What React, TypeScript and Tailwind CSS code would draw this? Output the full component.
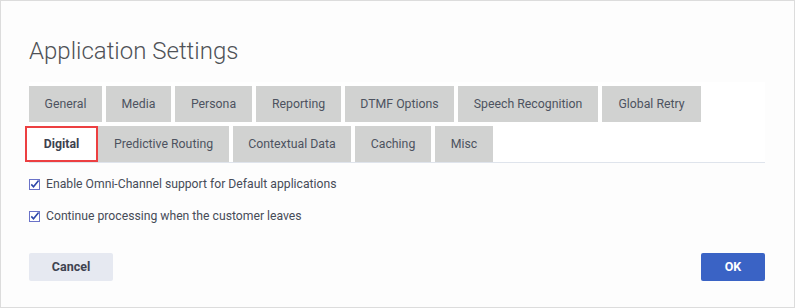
import React from 'react';

const rowOne = [
  { label: 'General', w: 'w-[73px]' },
  { label: 'Media', w: 'w-[65px]' },
  { label: 'Persona', w: 'w-[77px]' },
  { label: 'Reporting', w: 'w-[85px]' },
  { label: 'DTMF Options', w: 'w-[109px]' },
  { label: 'Speech Recognition', w: 'w-[140px]' },
  { label: 'Global Retry', w: 'w-[99px]' },
];

const rowTwo = [
  { label: 'Predictive Routing', w: 'w-[131px]' },
  { label: 'Contextual Data', w: 'w-[118px]' },
  { label: 'Caching', w: 'w-[76px]' },
  { label: 'Misc', w: 'w-[58px]' },
];

const CheckBox = () => (
  <svg width="11" height="11" viewBox="0 0 11 11" className="shrink-0">
    <rect x="0.5" y="0.5" width="10" height="10" fill="#fff" stroke="#6a72c8" strokeWidth="1" />
    <path d="M2.3 5.4 L4.5 7.8 L9.6 1.6" fill="none" stroke="#2d47a8" strokeWidth="1.6" />
  </svg>
);

const App: React.FC = () => {
  return (
    <div className="w-[795px] h-[308px] border border-[#dcdcdc] bg-[#fdfdfd] pl-[28px] pr-[29px] text-[#4b5060]" style={{ fontFamily: 'Roboto, "Liberation Sans", sans-serif' }}>
      <h1 className="mt-[36px] text-[24px] leading-[28px] font-light text-[#4f5257]">Application Settings</h1>

      <div className="mt-[17px] bg-white border-b border-[#dfe4ec] pt-[4px]">
        <div className="flex gap-[4px]">
          {rowOne.map(t => (
            <div key={t.label} className={`${t.w} h-[36px] pt-[1px] bg-[#d1d2d1] flex items-center justify-center text-[12.3px] text-[#4d5260]`}>
              {t.label}
            </div>
          ))}
        </div>
        <div className="flex mt-[4px]">
          <div className="-ml-[4px] w-[73px] h-[36px] border-2 border-[#ec3f41] bg-white flex items-center justify-center text-[12.3px] font-bold text-[#3d4250]">
            Digital
          </div>
          <div className="flex gap-[4px]">
            {rowTwo.map(t => (
              <div key={t.label} className={`${t.w} h-[36px] pt-[1px] bg-[#d1d2d1] flex items-center justify-center text-[12.3px] text-[#4d5260]`}>
                {t.label}
              </div>
            ))}
          </div>
        </div>
      </div>

      <div className="mt-[11px] flex flex-col gap-[12px] text-[12.2px] text-[#474c58]">
        <label className="flex items-center gap-[6px] h-[20px]">
          <CheckBox />
          <span>Enable Omni-Channel support for Default applications</span>
        </label>
        <label className="flex items-center gap-[6px] h-[20px]">
          <CheckBox />
          <span>Continue processing when the customer leaves</span>
        </label>
      </div>

      <div className="mt-[27px] flex justify-between">
        <button className="w-[84px] h-[28px] rounded-[2px] bg-[#e6e9f1] text-[12.5px] font-bold text-[#3e4350]">Cancel</button>
        <button className="w-[64px] h-[28px] rounded-[2px] bg-[#3a63c5] text-[12.5px] font-bold text-white">OK</button>
      </div>
    </div>
  );
};

export default App;
